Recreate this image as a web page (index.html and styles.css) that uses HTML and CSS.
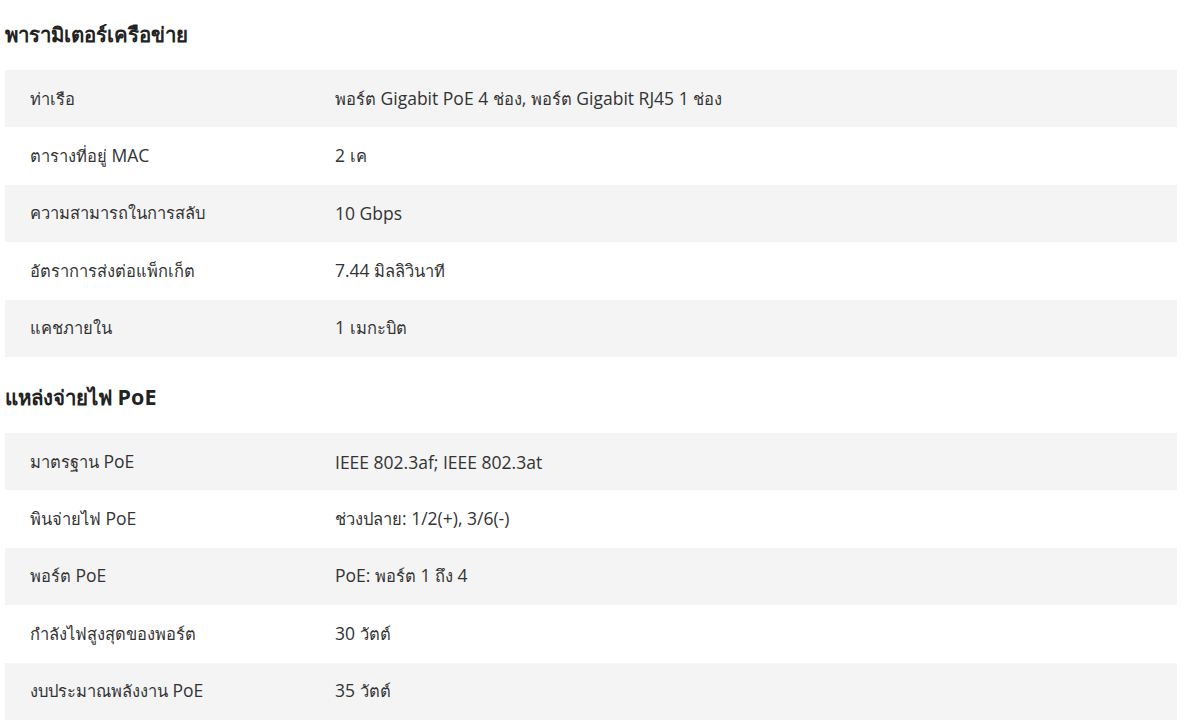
FILE: index.html
```html
<!DOCTYPE html>
<html lang="th">
<head>
<meta charset="utf-8">
<title>Specs</title>
<link rel="stylesheet" href="styles.css">
</head>
<body>
<section class="spec-section">
  <h2 class="spec-title"><span class="th">พารามิเตอร์เครือข่าย</span></h2>
  <div class="spec-table">
    <div class="spec-row"><div class="spec-label"><span class="th">ท่าเรือ</span></div><div class="spec-value"><span class="th">พอร์ต</span> Gigabit PoE 4 <span class="th">ช่อง</span>, <span class="th">พอร์ต</span> Gigabit RJ45 1 <span class="th">ช่อง</span></div></div>
    <div class="spec-row"><div class="spec-label"><span class="th">ตารางที่อยู่</span> MAC</div><div class="spec-value">2 <span class="th">เค</span></div></div>
    <div class="spec-row"><div class="spec-label"><span class="th">ความสามารถในการสลับ</span></div><div class="spec-value">10 Gbps</div></div>
    <div class="spec-row"><div class="spec-label"><span class="th">อัตราการส่งต่อแพ็กเก็ต</span></div><div class="spec-value">7.44 <span class="th">มิลลิวินาที</span></div></div>
    <div class="spec-row"><div class="spec-label"><span class="th">แคชภายใน</span></div><div class="spec-value">1 <span class="th">เมกะบิต</span></div></div>
  </div>
</section>
<section class="spec-section">
  <h2 class="spec-title"><span class="th">แหล่งจ่ายไฟ</span> PoE</h2>
  <div class="spec-table">
    <div class="spec-row"><div class="spec-label"><span class="th">มาตรฐาน</span> PoE</div><div class="spec-value">IEEE 802.3af; IEEE 802.3at</div></div>
    <div class="spec-row"><div class="spec-label"><span class="th">พินจ่ายไฟ</span> PoE</div><div class="spec-value"><span class="th">ช่วงปลาย</span>: 1/2(+), 3/6(-)</div></div>
    <div class="spec-row"><div class="spec-label"><span class="th">พอร์ต</span> PoE</div><div class="spec-value">PoE: <span class="th">พอร์ต</span> 1 <span class="th">ถึง</span> 4</div></div>
    <div class="spec-row"><div class="spec-label"><span class="th">กำลังไฟสูงสุดของพอร์ต</span></div><div class="spec-value">30 <span class="th">วัตต์</span></div></div>
    <div class="spec-row"><div class="spec-label"><span class="th">งบประมาณพลังงาน</span> PoE</div><div class="spec-value">35 <span class="th">วัตต์</span></div></div>
  </div>
</section>
</body>
</html>
```
FILE: styles.css
```css
html, body {
  margin: 0;
  padding: 0;
  background: #ffffff;
}
body {
  font-family: "Open Sans", "Noto Sans", "DejaVu Sans", sans-serif;
  color: #333333;
  font-size: 17.5px;
  padding: 0 5px;
  width: 1172px;
}
.th {
  font-size: 16.5px;
}
.spec-section {
  display: flex;
  flex-direction: column;
}
.spec-section + .spec-section {
  margin-top: 6px;
}
.spec-title {
  margin: 0;
  height: 70px;
  line-height: 67px;
  font-size: 21.5px;
  font-weight: 700;
  color: #222222;
}
.spec-title .th {
  font-size: 20.4px;
}
.spec-table {
  display: flex;
  flex-direction: column;
}
.spec-row {
  display: grid;
  grid-template-columns: 305px 1fr;
  height: 57.4px;
  align-items: center;
}
.spec-row:nth-child(odd) {
  background: #f4f4f4;
}
.spec-label, .spec-value {
  padding-left: 25px;
}
```
